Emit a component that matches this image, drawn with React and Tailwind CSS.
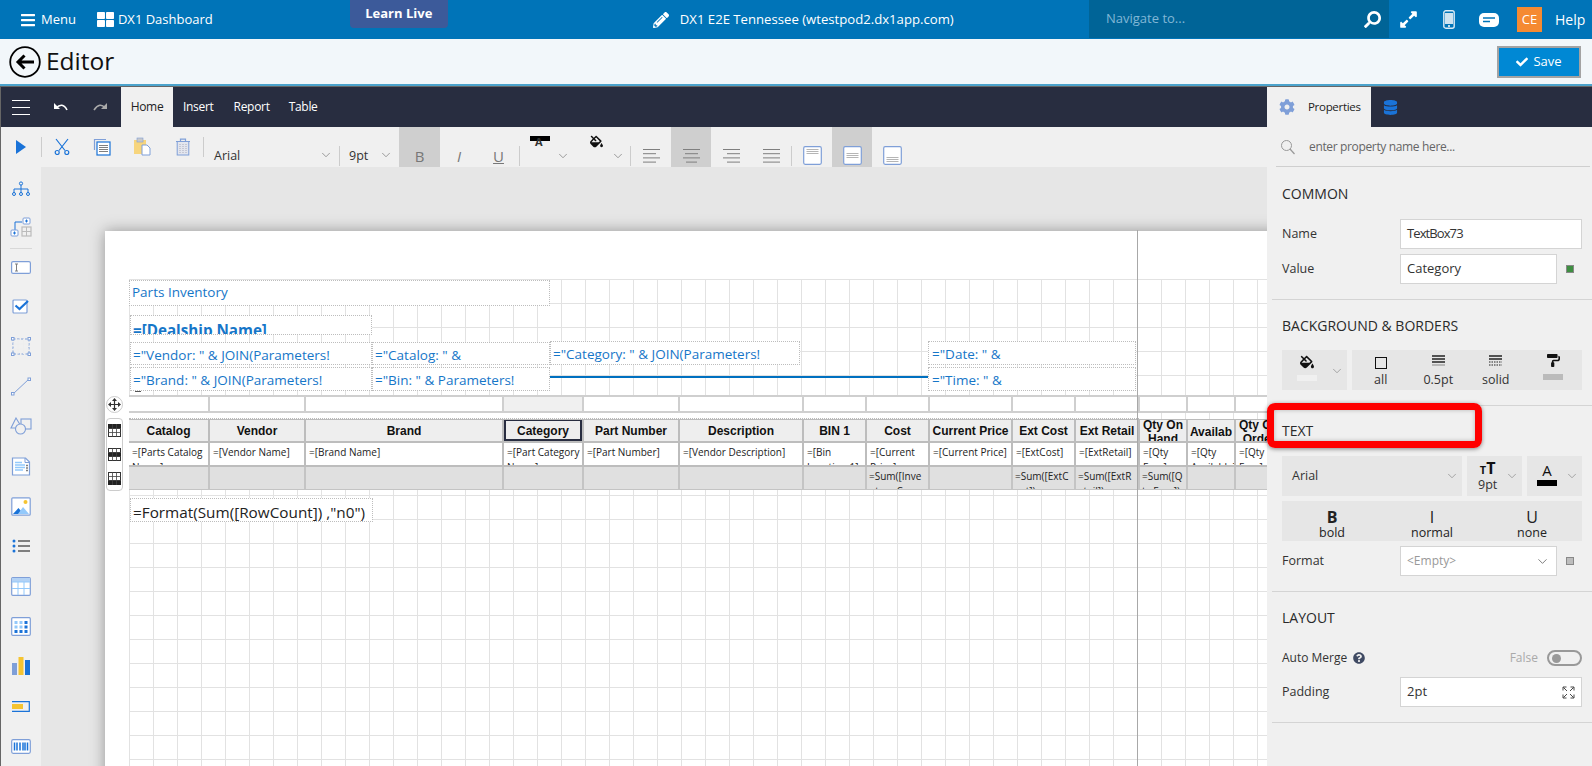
import React from "react";
import { ChevronDown } from "lucide-react";
import { FaFillDrip, FaPaintRoller, FaDatabase, FaCog, FaPencilAlt, FaExpandAlt, FaCheck, FaQuestionCircle, FaBars, FaThLarge, FaSearch } from "react-icons/fa";

const O = "#7f9fd8", B = "#1a73d8", L = "#93c9fb", Y = "#f5c431", G = "#7f7f7f";

const S = ({ w = 24, h = 24, children, className = "" }) => (
  <svg width={w} height={h} viewBox={`0 0 ${w} ${h}`} fill="none" className={`shrink-0 ${className}`}>{children}</svg>
);

const Chev = ({ c = "#777", size = 14 }) => <ChevronDown size={size} color={c} strokeWidth={1.2} />;

/* ---- ribbon icons ---- */
const Scissors = () => (
  <S w={16} h={17}><g stroke={B} strokeWidth="1.2"><path d="M2 1l9 11.500M14 1L5 12.500" /><circle cx="3.200" cy="14.500" r="2" /><circle cx="12.800" cy="14.500" r="2" /></g></S>
);
const Copy = () => (
  <S w={18} h={18}><path d="M1.500 12V1.500H13" stroke={O} strokeWidth="1.200" /><rect x="4" y="4" width="13" height="13" fill="#fff" stroke={B} strokeWidth="1.200" /><path d="M6 7.500h9M6 9.500h9M6 11.500h9M6 13.500h9" stroke={G} /></S>
);
const Paste = () => (
  <S w={18} h={19}><rect x="1" y="3" width="12" height="14" fill="#f7d57d" /><rect x="4" y="1" width="6" height="4" fill="#c9c9c9" stroke={O} strokeWidth=".6" /><path d="M9 8h5l3 3v7H9z" fill="#fff" stroke={O} /></S>
);
const Trash = () => (
  <S w={16} h={18}><path d="M1 3.500h14M5.500 3.500V1.200h5v2.300" stroke={O} strokeWidth="1.200" /><rect x="2.200" y="3.500" width="11.600" height="13.500" fill="#e3e6ee" stroke={O} /><path d="M5 6v9M8 6v9M11 6v9" stroke="#aab" strokeDasharray="1 1" /></S>
);
const Lines = ({ rows }) => (
  <S w={18} h={14}>{rows.map(([a, b], i) => <path key={i} d={`M${a} ${0.5 + i * 4.200}H${b}`} stroke={G} />)}</S>
);
const VAlign = ({ y }) => (
  <S w={19} h={19}><rect x=".7" y=".7" width="17.600" height="17.600" rx="1.500" fill="#fff" stroke={O} strokeWidth="1.200" /><path d={`M3.500 ${y}.5h12M3.500 ${y + 2}.5h12M3.500 ${y + 4}.5h12`} stroke="#b5b5b5" /></S>
);

/* ---- sidebar icons ---- */
const SideIcons = [
  <S w={20} h={16}><g stroke={B} strokeWidth="1"><circle cx="10" cy="2.500" r="1.600" /><path d="M10 4v4M3 12V8h14v4M10 8v4" /><circle cx="3" cy="13" r="1.500" /><circle cx="10" cy="13" r="1.500" /><circle cx="17" cy="13" r="1.500" /></g></S>,
  <S w={22} h={20}><path d="M5 13V5h7" stroke={B} /><rect x="1" y="13" width="7" height="6" rx="1" fill="#fff" stroke={O} /><path d="M3 16h3M4.500 14.500v3" stroke={B} /><rect x="13" y="1" width="7" height="6" rx="1" fill="#fff" stroke={O} /><path d="M15 4h3M16.500 2.500v3" stroke={B} /><rect x="12" y="10" width="9" height="9" stroke="#bbb" strokeWidth="1.200" /><path d="M16.500 10v9M12 14.500h9" stroke="#bbb" /></S>,
  <S w={20} h={13}><rect x=".6" y=".6" width="18.800" height="11.800" rx="1.500" fill="#fff" stroke={O} strokeWidth="1.200" /><path d="M4 3h3M4 10h3M5.500 3v7" stroke={G} /></S>,
  <S w={18} h={16}><rect x="1" y="2" width="14" height="13" rx="1" fill="#fff" stroke={O} strokeWidth="1.200" /><path d="M3.500 7.500l4 3.500L16 3" stroke={B} strokeWidth="2.200" /></S>,
  <S w={20} h={19}><rect x="2" y="2" width="16" height="15" stroke={O} strokeDasharray="2.500 1.500" /><path d="M7 2v15M12.500 2v15M2 7h16M2 12h16" stroke="#eee" /><rect x=".5" y=".5" width="2.500" height="2.500" fill="#fff" stroke={O} /><rect x="17" y=".5" width="2.500" height="2.500" fill="#fff" stroke={O} /><rect x=".5" y="16" width="2.500" height="2.500" fill="#fff" stroke={O} /><rect x="17" y="16" width="2.500" height="2.500" fill="#fff" stroke={O} /></S>,
  <S w={20} h={19}><path d="M2 17L18 2" stroke={O} /><rect x=".5" y="15.500" width="2.500" height="2.500" fill="#fff" stroke={O} /><rect x="17" y="1" width="2.500" height="2.500" fill="#fff" stroke={O} /></S>,
  <S w={22} h={18}><path d="M6 1l6 10H1z" stroke={O} strokeWidth="1.100" /><rect x="11" y="2" width="10" height="10" fill="#f0f0f0" stroke={O} strokeWidth="1.100" /><circle cx="10.500" cy="12" r="5" fill="#f0f0f0" stroke={O} strokeWidth="1.100" /></S>,
  <S w={20} h={19}><path d="M1.500 1h13l4 4v13h-17z" fill="#fff" stroke={O} strokeWidth="1.200" /><path d="M14 1v4.500h4.500" stroke={O} /><path d="M4 5.500h7M4 8h10M4 10.500h10M4 13h8" stroke={L} strokeWidth="1.500" /><path d="M15 8.500h2M15 11h2M15 13.500h2" stroke={G} strokeWidth="1.500" /></S>,
  <S w={20} h={19}><rect x=".8" y=".8" width="18.400" height="17.400" rx="1" fill="#fff" stroke={O} strokeWidth="1.200" /><circle cx="14.500" cy="5" r="2" fill={Y} /><path d="M2 17l5.500-6L10 14l-2 3z" fill={B} /><path d="M7 17l5-7 6 7z" fill={L} /></S>,
  <S w={18} h={14}><g fill={B}><circle cx="2" cy="2" r="1.500" /><circle cx="2" cy="7" r="1.500" /><circle cx="2" cy="12" r="1.500" /></g><path d="M6 2h12M6 7h12M6 12h12" stroke={G} strokeWidth="2" /></S>,
  <S w={20} h={19}><rect x=".7" y=".7" width="18.600" height="17.600" rx="1" fill="#fff" stroke={O} strokeWidth="1.200" /><rect x="1" y="1" width="18" height="4" fill="#b3d2f5" /><path d="M1 5h18M1 11.500h18M7 5v13M13 5v13" stroke={L} /></S>,
  <S w={20} h={19}><rect x=".7" y=".7" width="18.600" height="17.600" rx="1" fill="#fff" stroke={O} strokeWidth="1.200" />{[4, 8.500, 13].map((y, r) => [3.500, 8.500, 13.500].map((x, c) => <rect key={r + "-" + c} x={x} y={y} width="3" height="3" fill={c === 2 || r === 2 ? B : L} />))}</S>,
  <S w={18} h={18}><rect x="0" y="6" width="5" height="12" fill={O} /><rect x="6.500" y="0" width="5" height="18" fill={Y} /><rect x="13" y="3" width="5" height="15" fill={B} /></S>,
  <S w={18} h={11}><path d="M0 .7h17.300v9.600H0" stroke={B} strokeWidth="1.200" /><rect x="0" y="3" width="11" height="5" fill={Y} /></S>,
  <S w={20} h={15}><rect x=".7" y=".7" width="18.600" height="13.600" rx="1.500" fill="#fff" stroke={O} strokeWidth="1.200" /><path d="M3.500 3.500v8M6 3.500v8M9 3.500v8M12 3.500v8M14 3.500v8M16.500 3.500v8" stroke={B} strokeWidth="1.500" /></S>,
];
const sideH = ["h-[44px]", "h-[32px]", "h-[37px]"];

/* ---- report items ---- */
const Box = ({ className = "", color = "text-[#1676c8]", children }) => (
  <div className={`absolute bg-white border border-dotted border-[#bdbdbd] overflow-hidden whitespace-nowrap ${color} ${className}`}>{children}</div>
);

const cols = "grid grid-cols-[81px_96px_198px_80px_96px_124px_63px_63px_83px_63px_64px_48px_48px_48px]";
const heads = ["Catalog", "Vendor", "Brand", "Category", "Part Number", "Description", "BIN 1", "Cost", "Current Price", "Ext Cost", "Ext Retail", "Qty On Hand", "Qty Available", "Qty On Order"];
const data = ["=[Parts Catalog Name]", "=[Vendor Name]", "=[Brand Name]", "=[Part Category Name]", "=[Part Number]", "=[Vendor Description]", "=[Bin Location 1]", "=[Current Price]", "=[Current Price]", "=[ExtCost]", "=[ExtRetail]", "=[Qty Free]", "=[Qty Available]", "=[Qty Free]"];
const sums = ["", "", "", "", "", "", "", "=Sum([Inventory Cost])", "", "=Sum([ExtCost])", "=Sum([ExtRetail])", "=Sum([Qty Free])", "", ""];

/* ---- property panel ---- */
const Field = ({ label, children }) => (
  <div className="flex items-center h-[30px] text-[12.500px] text-[#333]">
    <span className="w-[118px]">{label}</span>
    {children}
  </div>
);
const Input = ({ w, children, className = "" }) => (
  <div className={`${w} h-[30px] bg-white border border-[#d4d4d4] flex items-center px-[6px] text-[13px] ${className}`}>{children}</div>
);
const Sq = ({ c }) => <span className={`ml-[9px] w-2 h-2 border border-[#888] ${c}`} />;
const Head = ({ children }) => <div className="text-[14px] font-medium text-[#2a2a2a] h-[20px] leading-[20px]">{children}</div>;
const Small = ({ icon, label }) => (
  <div className="w-[57.500px] flex flex-col items-center">
    <div className="h-[21px] flex items-center">{icon}</div>
    <span className="text-[12.500px] leading-[17px] text-[#333]">{label}</span>
  </div>
);
const Biu = ({ letter, label, cls }) => (
  <div className="flex-1 flex flex-col items-center text-[#222] pt-[8px]">
    <span className={`text-[16px] leading-[17px] ${cls}`}>{letter}</span>
    <span className="text-[12.500px] leading-[13px]">{label}</span>
  </div>
);

export default function App() {
  return (
    <div className="w-full h-[766px] overflow-hidden flex flex-col relative bg-white [font-family:'Open_Sans',sans-serif] text-[13.500px]">
      {/* top bar */}
      <div className="h-[39px] shrink-0 bg-[#0074b8] text-white flex items-center text-[13px] relative">
        <FaBars size={16} color="#fff" className="ml-[20px]" />
        <span className="ml-[5px]">Menu</span>
        <FaThLarge size={17} color="#fff" className="ml-[21px]" />
        <span className="ml-[4px]">DX1 Dashboard</span>
        <div className="ml-[137px] self-start w-[98px] h-[28px] bg-[#3c5a9a] rounded-b-[4px] flex items-center justify-center font-bold text-[13px]">Learn Live</div>
        <FaPencilAlt size={16} color="#fff" className="ml-[205px]" />
        <span className="ml-[11px] text-[13.150px]">DX1 E2E Tennessee (wtestpod2.dx1app.com)</span>
        <div className="ml-auto flex items-center h-[39px]">
          <div className="w-[300px] h-[38px] self-start bg-[#006497] flex items-center pl-[17px] pr-[8px] text-[#80b7d6]">
            <span>Navigate to...</span>
            <FaSearch size={17} color="#fff" className="ml-auto -scale-x-100" />
          </div>
          <FaExpandAlt size={19} color="#fff" className="ml-[10px]" />
          <S w={12} h={19} className="ml-[25px]"><rect x=".8" y=".8" width="10.400" height="17.400" rx="2" fill="#0074b8" stroke="#dcebf5" strokeWidth="1.400" /><rect x="2" y="3" width="8" height="11" fill="#cfe3f0" /><circle cx="6" cy="16" r="1" fill="#fff" /></S>
          <S w={20} h={14} className="ml-[24px]"><rect width="20" height="14" rx="5" fill="#fff" /><path d="M4 5h12M4 8.500h7" stroke="#0074b8" strokeWidth="1.300" /></S>
          <div className="ml-[18px] w-[25px] h-[25px] bg-[#f58a32] flex items-center justify-center text-[13px]">CE</div>
          <span className="ml-[13px] w-[28px] mr-[9px] text-[14px]">Help</span>
        </div>
      </div>

      {/* title bar */}
      <div className="h-[45px] shrink-0 bg-[#f2f7fa] flex items-center">
        <S w={32} h={32} className="ml-[9px]"><circle cx="16" cy="16" r="14.800" stroke="#000" strokeWidth="1.800" /><path d="M25 16H10M15.500 9.500L9 16l6.500 6.500" stroke="#000" strokeWidth="3" /></S>
        <span className="ml-[5px] text-[24.500px] text-[#111]">Editor</span>
        <div className="ml-auto mr-[11px] w-[84px] h-[32px] bg-[#0088d4] border-2 border-[#a3a3a3] text-white flex items-center justify-center gap-[5px] text-[13px]">
          <FaCheck size={12} color="#fff" />Save
        </div>
      </div>
      <div className="h-[2px] shrink-0 bg-[#4ba3cc]" />
      <div className="h-px shrink-0 bg-[#666]" />

      {/* dark menu strip */}
      <div className="h-[40px] shrink-0 bg-[#282d40] flex text-white text-[12px] tracking-[-0.3px] border-l border-[#666]">
        <div className="w-[52px] flex items-center pl-[11px]">
          <div className="w-[18px] h-[15px] flex flex-col justify-between"><i className="h-px bg-white block" /><i className="h-px bg-white block" /><i className="h-px bg-white block" /></div>
        </div>
        <S w={15} h={10} className="self-center"><path d="M1 1v6h6z" fill="#fff" /><path d="M3 6c4-4 8-4 11 2" stroke="#fff" strokeWidth="1.600" /></S>
        <S w={15} h={10} className="self-center ml-[25px]"><path d="M1 8c4-6 8-6 11-2" stroke="#aaa" strokeWidth="1.600" /><path d="M14 1v6h-6z" fill="#aaa" /></S>
        <div className="ml-[13px] w-[52px] bg-[#f0f0f0] text-[#222] flex items-center justify-center">Home</div>
        <span className="ml-[10px] self-center">Insert</span>
        <span className="ml-[20px] self-center">Report</span>
        <span className="ml-[19px] self-center">Table</span>
        <div className="ml-auto w-[325px] flex">
          <div className="w-[104px] bg-[#f0f0f0] text-[#222] flex items-center pl-[12px]">
            <FaCog size={16} color={O} />
            <span className="ml-[13px] text-[11.500px] tracking-[-0.3px]">Properties</span>
          </div>
          <FaDatabase size={15} color={B} className="self-center ml-[12px]" />
        </div>
      </div>

      <div className="flex-1 flex min-h-0">
        {/* editor */}
        <div className="flex-1 min-w-0 flex flex-col border-l border-[#666]">
          {/* ribbon */}
          <div className="h-[40px] shrink-0 bg-[#f0f0f0] flex text-[#333] text-[12.500px]">
            <div className="w-[40px] pt-[13px] flex justify-center"><S w={10} h={14}><path d="M0 0l10 7-10 7z" fill={B} /></S></div>
            <i className="w-px h-[20px] mt-[10px] bg-[#ccc]" />
            <div className="w-[40px] pt-[11px] flex justify-center"><Scissors /></div>
            <div className="w-[40px] pt-[11px] flex justify-center"><Copy /></div>
            <div className="w-[40px] pt-[10px] flex justify-center"><Paste /></div>
            <div className="w-[41px] pt-[11px] flex justify-center"><Trash /></div>
            <i className="w-px h-[20px] mt-[10px] bg-[#ccc]" />
            <div className="w-[135px] pl-[10px] pr-[6px] pt-[20px] h-full flex items-start justify-between"><span>Arial</span><span className="mt-[1px]"><Chev /></span></div>
            <i className="w-px h-[20px] mt-[19px] bg-[#ccc]" />
            <div className="w-[59px] pl-[9px] pr-[6px] pt-[20px] flex items-start justify-between"><span>9pt</span><span className="mt-[1px]"><Chev /></span></div>
            <div className="w-[41px] bg-[#cfcfcf] flex justify-center pt-[19px] text-[15px] text-[#777] font-medium leading-[20px]">B</div>
            <div className="w-[38px] flex justify-center pt-[19px] text-[15px] text-[#777] italic leading-[20px]">I</div>
            <div className="w-[41px] flex justify-center pt-[19px] text-[15px] text-[#777] underline leading-[20px]">U</div>
            <i className="w-px h-[20px] mt-[19px] bg-[#ccc]" />
            <div className="w-[58px] relative">
              <div className="absolute left-[10px] top-[9px] w-[20px] h-[5px] bg-black" />
              <div className="absolute left-[15px] top-[9px] text-[11px] leading-[11px] font-bold text-[#333]">A</div>
              <span className="absolute left-[36px] top-[22px]"><Chev /></span>
            </div>
            <div className="w-[52px] relative">
              <FaFillDrip size={13} color="#111" className="absolute left-[12px] top-[8px]" />
              <span className="absolute left-[33px] top-[22px]"><Chev /></span>
            </div>
            <i className="w-px h-[20px] mt-[19px] bg-[#ccc]" />
            <div className="w-[40px] pt-[22px] flex justify-center"><Lines rows={[[1, 18], [1, 14], [1, 18], [1, 14]]} /></div>
            <div className="w-[40px] pt-[22px] flex justify-center bg-[#cfcfcf]"><Lines rows={[[1, 18], [3, 16], [1, 18], [4, 15]]} /></div>
            <div className="w-[40px] pt-[22px] flex justify-center"><Lines rows={[[1, 18], [5, 18], [1, 18], [5, 18]]} /></div>
            <div className="w-[40px] pt-[22px] flex justify-center"><Lines rows={[[1, 18], [1, 18], [1, 18], [1, 18]]} /></div>
            <i className="w-px h-[20px] mt-[19px] bg-[#ccc]" />
            <div className="w-[40px] pt-[19px] flex justify-center"><VAlign y={3} /></div>
            <div className="w-[40px] pt-[19px] flex justify-center bg-[#cfcfcf]"><VAlign y={7} /></div>
            <div className="w-[40px] pt-[19px] flex justify-center"><VAlign y={11} /></div>
          </div>

          <div className="flex-1 flex min-h-0">
            {/* sidebar */}
            <div className="w-[40px] shrink-0 bg-[#f0f0f0] flex flex-col items-center">
              {SideIcons.map((ic, i) => (
                <React.Fragment key={i}>
                  <div className={`flex items-center justify-center w-full shrink-0 ${sideH[i] || "h-[40px]"}`}>{ic}</div>
                  {i === 1 && <i className="w-[22px] h-px bg-[#d8d8d8] shrink-0 mt-[5px]" />}
                </React.Fragment>
              ))}
            </div>

            {/* canvas */}
            <div className="flex-1 min-w-0 bg-[#e6e6e6] overflow-hidden relative">
              <div className="absolute left-[64px] top-[64px] w-[1400px] h-[600px] bg-white shadow-[0_0_14px_rgba(0,0,0,0.35)]">
                <div className="absolute left-0 right-0 -top-px h-[601px]">
                  {/* grid sheet */}
                  <div className="absolute left-[24px] top-[49px] right-0 bottom-0 bg-[linear-gradient(#e2e2e2_1px,transparent_1px),linear-gradient(90deg,#e2e2e2_1px,transparent_1px)] bg-[size:24px_24px]" />

                  <Box className="left-[24px] top-[50px] w-[421px] h-[26px] text-[13.500px] leading-[22px] pl-[2px]">Parts Inventory</Box>
                  <Box className="left-[25px] top-[85px] w-[242px] h-[20px] text-[15.200px] font-bold leading-[28px] pl-[2px]">=[Dealship Name]</Box>
                  <Box className="left-[25px] top-[112px] w-[242px] h-[23px] text-[13.500px] leading-[24px] pl-[2px]">="Vendor: " &amp; JOIN(Parameters!</Box>
                  <Box className="left-[267px] top-[112px] w-[178px] h-[23px] text-[13.500px] leading-[24px] pl-[2px]">="Catalog: " &amp;</Box>
                  <Box className="left-[445px] top-[111px] w-[250px] h-[24px] text-[13.500px] leading-[25px] pl-[2px]">="Category: " &amp; JOIN(Parameters!</Box>
                  <Box className="left-[25px] top-[137px] w-[242px] h-[24px] text-[13.500px] leading-[24px] pl-[2px]">="Brand: " &amp; JOIN(Parameters!</Box>
                  <Box className="left-[267px] top-[137px] w-[178px] h-[24px] text-[13.500px] leading-[24px] pl-[2px]">="Bin: " &amp; Parameters!</Box>
                  <div className="absolute left-[30px] top-[161px] w-[6px] h-px bg-[#555]" />
                  <div className="absolute left-[445px] top-[146px] w-[378px] h-[2px] bg-[#0070c0]" />
                  <Box className="left-[823px] top-[111px] w-[208px] h-[24px] text-[13.500px] leading-[25px] pl-[3px]">="Date: " &amp;</Box>
                  <Box className="left-[823px] top-[137px] w-[208px] h-[24px] text-[13.500px] leading-[24px] pl-[3px]">="Time: " &amp;</Box>

                  {/* table */}
                  <div className="absolute left-[24px] top-[165px] w-[1200px]">
                    <div className={`${cols} h-[18px] border-y-2 border-[#cfcfcf] bg-white`}>
                      {heads.map((h, i) => <div key={i} className={`border-r-2 border-[#cfcfcf] ${i === 3 ? "bg-[#f0f0f0]" : ""}`} />)}
                    </div>
                    <div className="h-[6px] bg-white border-b border-dotted border-[#bbb] w-[1010px]" />
                    <div className={`${cols} h-[24px] border-t border-[#bbb] bg-[#eeeeee]`}>
                      {heads.map((h, i) => (
                        <div key={i} className={`flex items-center justify-center text-center overflow-hidden border-r-2 border-b-2 border-[#bdbdbd] text-[12px] font-bold text-[#111] [font-family:'Liberation_Sans',sans-serif] ${i === 3 ? "relative" : ""} ${i >= 11 ? "pt-[2px]" : ""} ${i === 12 ? "leading-[20px]" : "leading-[14px]"}`}>
                          {i === 12 ? <span className="block">Qty<br />Availab<br />&nbsp;</span> : h}
                          {i === 3 && <div className="absolute inset-0 -top-px border-2 border-[#282d40]" />}
                        </div>
                      ))}
                    </div>
                    <div className={`${cols} h-[24px] bg-white`}>
                      {data.map((h, i) => (
                        <div key={i} className="overflow-hidden border-r-2 border-b-2 border-[#bdbdbd] text-[10px] leading-[15px] pt-[2px] pl-[3px] text-[#222]">{h}</div>
                      ))}
                    </div>
                    <div className={`${cols} h-[23px] bg-[#e0e0e0] border-b border-[#c4c4c4]`}>
                      {sums.map((h, i) => (
                        <div key={i} className={`overflow-hidden break-all border-r-2 border-[#c4c4c4] text-[10px] leading-[15px] pt-[2px] pl-[2px] text-[#222] ${i === 11 ? "pr-0" : "pr-[5px]"}`}>
                          {i === 11 ? <span className="[word-break:break-all] block">=Sum([Q<wbr />ty Free])</span> : h}
                        </div>
                      ))}
                    </div>
                  </div>

                  <Box color="text-[#222]" className="left-[25px] top-[268px] w-[243px] h-[24px] text-[15.300px] leading-[26px] pl-[2px]">=Format(Sum([RowCount]) ,"n0")</Box>

                  <div className="absolute left-[1032px] top-0 bottom-0 w-px bg-[#a8a8a8]" />

                  {/* table handles */}
                  <div className="absolute left-[1px] top-[166px] w-[17px] h-[17px] rounded-full bg-white border border-[#ccc] flex items-center justify-center">
                    <S w={13} h={13}><path d="M6.500 0L9 3H4zM6.500 13L9 10H4zM0 6.500L3 9V4zM13 6.500L10 9V4z" fill="#333" /><path d="M6.500 2v9M2 6.500h9" stroke="#333" strokeWidth="1.200" /></S>
                  </div>
                  <div className="absolute left-[1px] top-[188px] w-[17px] h-[73px] rounded-[4px] bg-white border border-[#ccc] flex flex-col items-center justify-around">
                    {[0, 1, 2].map((k) => (
                      <S key={k} w={13} h={13}><rect x=".5" y=".5" width="12" height="12" fill="#fff" stroke="#333" /><rect y={k * 4} width="13" height="5" fill="#222" /><path d="M4.500 0v13M8.500 0v13M0 4.500h13M0 8.500h13" stroke="#444" strokeWidth=".8" /></S>
                    ))}
                  </div>
                </div>
              </div>
            </div>
          </div>
        </div>

        {/* properties panel */}
        <div className="w-[325px] shrink-0 bg-[#f0f0f0] pl-[5px] text-[#333] relative">
          <div className="h-[40px] flex items-center border-b border-[#cfcfcf] ml-[4px] mr-[2px]">
            <S w={15} h={16} className="ml-[4px]"><circle cx="6.500" cy="6.500" r="5" stroke="#999" /><path d="M10 10l4.500 5" stroke="#999" strokeWidth="1.200" /></S>
            <span className="ml-[14px] text-[12px] tracking-[-0.35px] text-[#666]">enter property name here...</span>
          </div>
          <div className="pl-[10px] pr-[10px]">
            <div className="pt-[17px]"><Head>COMMON</Head></div>
            <div className="mt-[15px]"><Field label="Name"><Input w="w-[182px]"><span className="tracking-[-0.9px]">TextBox73</span></Input></Field></div>
            <div className="mt-[5px]"><Field label="Value"><Input w="w-[157px]">Category</Input><Sq c="bg-[#3e8e41]" /></Field></div>
          </div>
          <div className="mt-[15px] h-px bg-[#d4d4d4]" />
          <div className="pl-[10px] pr-[10px]">
            <div className="pt-[16px]"><Head>BACKGROUND &amp; BORDERS</Head></div>
            <div className="mt-[14px] flex gap-[5px]">
              <div className="w-[65px] h-[40px] bg-[#e6e6e6] flex items-start pl-[15px] pt-[5px] relative">
                <div className="flex flex-col items-center w-[20px]">
                  <FaFillDrip size={14} color="#111" />
                  <i className="w-[20px] h-[6px] bg-[#f0f0f0] mt-[6px]" />
                </div>
                <span className="absolute right-[3px] top-[14px]"><Chev c="#888" /></span>
              </div>
              <div className="w-[230px] h-[40px] bg-[#e6e6e6] flex">
                <Small icon={<S w={12} h={12} className="mt-[4px]"><rect x=".5" y=".5" width="11" height="11" stroke="#111" /></S>} label="all" />
                <Small icon={<S w={13} h={11}><path d="M0 1h13M0 4h13M0 7h13" stroke="#222" strokeWidth="1.500" /><path d="M0 10h13" stroke="#888" /></S>} label="0.5pt" />
                <Small icon={<S w={13} h={11}><path d="M0 1h13M0 4h13" stroke="#222" strokeWidth="1.500" /><path d="M0 7h13M0 10h13" stroke="#222" strokeDasharray="1.500 1" /></S>} label="solid" />
                <Small icon={<FaPaintRoller size={13} color="#111" />} label={<i className="block w-[20px] h-[6px] mt-[3px] bg-[#bbb]" />} />
              </div>
            </div>
          </div>
          <div className="mt-[15px] h-px bg-[#d4d4d4]" />
          <div className="pl-[10px] pr-[10px]">
            <div className="pt-[15px]"><Head>TEXT</Head></div>
            <div className="mt-[15px] flex gap-[5px]">
              <div className="w-[180px] h-[40px] bg-[#e6e6e6] flex items-center justify-between pl-[10px] pr-[3px] text-[12.500px]"><span>Arial</span><Chev c="#888" /></div>
              <div className="w-[55px] h-[40px] bg-[#e6e6e6] flex items-center justify-between pl-[11px] pr-[3px]">
                <div className="flex flex-col items-center text-[#111]">
                  <span className="font-bold h-[17px] leading-[17px]"><span className="text-[11px]">T</span><span className="text-[16px]">T</span></span>
                  <span className="text-[12.500px] text-[#333] leading-[15px]">9pt</span>
                </div>
                <Chev c="#888" />
              </div>
              <div className="w-[55px] h-[40px] bg-[#e6e6e6] flex items-center justify-between pl-[10px] pr-[3px]">
                <div className="flex flex-col items-center">
                  <span className="text-[15px] leading-[19px] text-[#111]">A</span>
                  <i className="w-[20px] h-[6px] bg-black" />
                  <i className="h-[6px]" />
                </div>
                <Chev c="#888" />
              </div>
            </div>
            <div className="mt-[5px] h-[40px] bg-[#e6e6e6] flex items-start">
              <Biu letter="B" label="bold" cls="font-bold" />
              <Biu letter="I" label="normal" cls="" />
              <Biu letter="U" label="none" cls="" />
            </div>
            <div className="mt-[5px]">
              <Field label="Format">
                <Input w="w-[157px]" className="justify-between text-[#999]"><span className="text-[12px]">&lt;Empty&gt;</span><ChevronDown size={15} color="#555" strokeWidth={1.200} /></Input>
                <Sq c="bg-[#bdbdbd]" />
              </Field>
            </div>
          </div>
          <div className="mt-[15px] h-px bg-[#d4d4d4]" />
          <div className="pl-[10px] pr-[10px]">
            <div className="pt-[16px]"><Head>LAYOUT</Head></div>
            <div className="mt-[20px] h-[20px] flex items-center text-[12px]">
              <span>Auto Merge</span>
              <FaQuestionCircle size={12} color="#3f4a63" className="ml-[6px]" />
              <span className="ml-auto text-[#aaa]">False</span>
              <div className="ml-[9px] w-[35px] h-[16px] rounded-full border-2 border-[#999] flex items-center pl-[3px]"><i className="w-[9px] h-[9px] rounded-full bg-[#999]" /></div>
            </div>
            <div className="mt-[9px]">
              <Field label="Padding">
                <Input w="w-[182px]" className="justify-between"><span>2pt</span>
                  <S w={13} h={13}><path d="M1 4.500V1h3.500M8.500 1H12v3.500M12 8.500V12H8.500M4.500 12H1V8.500M1.500 1.500L5 5M11.500 1.500L8 5M11.500 11.500L8 8M1.500 11.500L5 8" stroke="#333" strokeWidth=".9" /></S>
                </Input>
              </Field>
            </div>
          </div>
          <div className="mt-[15px] h-px bg-[#d4d4d4]" />

          {/* red annotation */}
          <div className="absolute left-0 top-[276px] w-[215px] h-[45px] rounded-[8px] border-[7px] border-[#ff0000] shadow-[0_1px_4px_rgba(0,0,0,0.45),inset_0_0_4px_rgba(0,0,0,0.25)]" />
        </div>
      </div>
    </div>
  );
}
